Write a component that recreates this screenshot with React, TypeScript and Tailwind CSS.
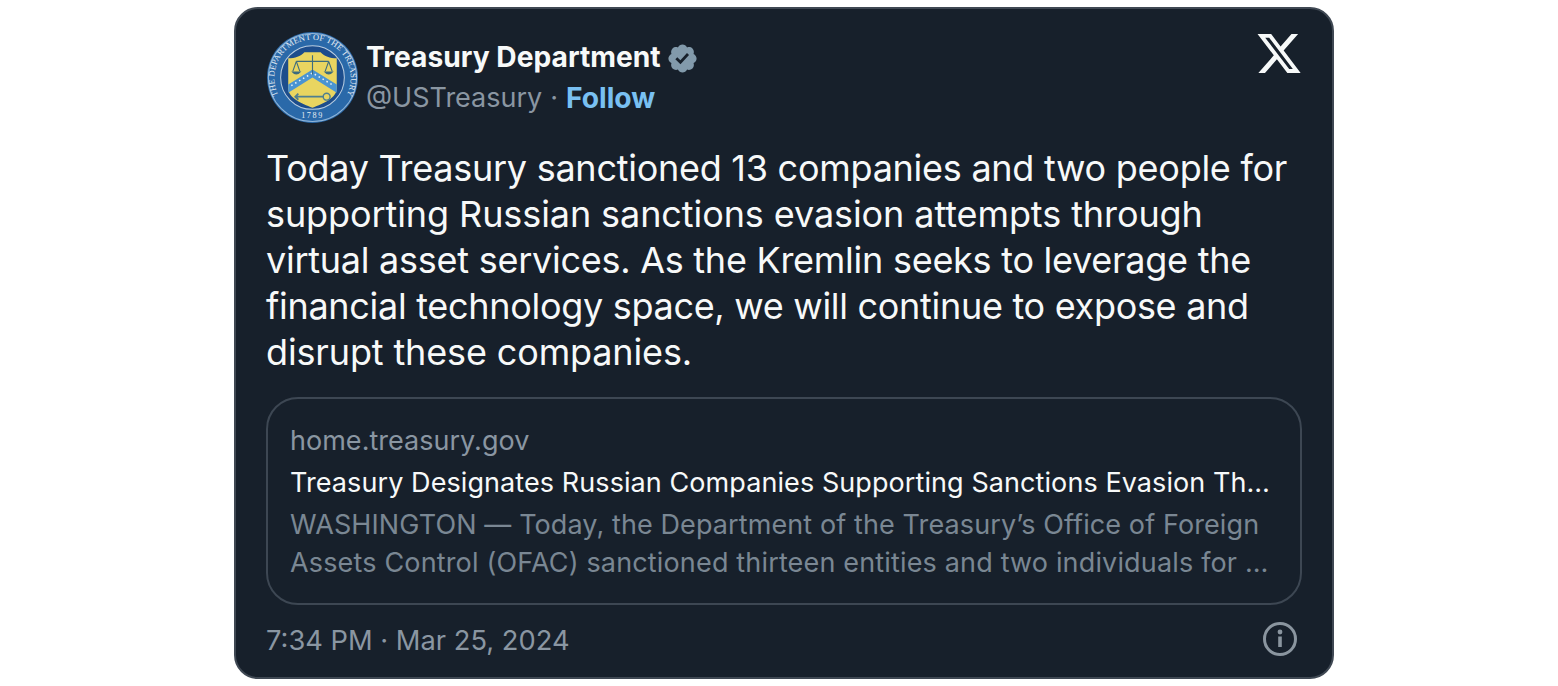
export default function App() {
  const font = { fontFamily: 'Inter, "Liberation Sans", sans-serif' };
  return (
    <div className="w-[1558px] h-[686px] bg-white pt-[7px] pl-[234px] overflow-hidden" style={font}>
      <div className="w-[1100px] h-[672px] bg-[#17202b] border-2 border-[#3f4853] rounded-[24px] pt-[24px] px-[30px] flex flex-col">
        <div className="flex justify-between h-[92px]">
          <div className="flex gap-[8px]">
            <svg width="91" height="91" viewBox="0 0 90 90" className="mt-[-1px] ml-[1px] shrink-0">
              <circle cx="45" cy="45" r="45" fill="#2a69a9" />
              <circle cx="45" cy="45" r="43.6" fill="none" stroke="#8fb4d8" strokeWidth="1" />
              <circle cx="45" cy="45" r="31.5" fill="#1d4d8c" stroke="#b9cde0" strokeWidth="1" />
              <defs>
                <path id="seal-top" d="M 11 62 A 37.8 37.8 0 1 1 79 62" />
              </defs>
              <text fontSize="8.4" fill="#e6edf3" fontFamily='"Liberation Serif", serif' letterSpacing="0.1">
                <textPath href="#seal-top" startOffset="50%" textAnchor="middle">THE DEPARTMENT OF THE TREASURY</textPath>
              </text>
              <text x="45" y="85" textAnchor="middle" fontSize="8" fill="#e6edf3" fontFamily='"Liberation Serif", serif' letterSpacing="1.6">1789</text>
              <path d="M21 26 C28 26 33 24 37 20 L53 20 C57 24 62 26 69 26 L69 56 C69 65 56 71 45 75 C34 71 21 65 21 56 Z" fill="#e9d560" />
              <path d="M21 52 L45 37 L69 52 L69 60 L45 45 L21 60 Z" fill="#4a94d2" />
              <path d="M24 53 L45 40.5 L66 53" fill="none" stroke="#eef3f5" strokeWidth="1.5" strokeDasharray="1.5 3" />
              <path d="M29 29 H61 M45 23 V42 M29 29 L25.5 39 M29 29 L32.5 39 M61 29 L57.5 39 M61 29 L64.5 39" stroke="#3d6c7e" strokeWidth="1.1" fill="none" />
              <path d="M24 39 Q29 45 34 39 Z M56 39 Q61 45 66 39 Z" fill="#3d6c7e" />
              <path d="M29 64 H56 M31 61 L28 64 L31 67" stroke="#4f7f90" strokeWidth="1.8" fill="none" />
              <circle cx="59" cy="64" r="3.4" fill="none" stroke="#4f7f90" strokeWidth="1.4" />
            </svg>
            <div className="flex flex-col pt-[4px]">
              <div className="flex items-center h-[40px]">
                <span className="text-[28.2px] font-bold text-[#f7f9f9] leading-[40px]">Treasury Department</span>
                <svg width="33" height="33" viewBox="0 0 24 24" className="ml-[5px] mt-[2px]">
                  <path fill="#829aab" d="M22.25 12c0-1.43-.88-2.67-2.19-3.34.46-1.39.2-2.9-.81-3.91s-2.52-1.27-3.91-.81c-.66-1.31-1.91-2.19-3.34-2.19s-2.67.88-3.33 2.19c-1.4-.46-2.91-.2-3.92.81s-1.26 2.52-.8 3.91c-1.31.67-2.2 1.91-2.2 3.34s.89 2.67 2.2 3.34c-.46 1.39-.21 2.9.8 3.91s2.52 1.26 3.91.81c.67 1.31 1.91 2.19 3.34 2.19s2.68-.88 3.34-2.19c1.39.45 2.9.2 3.91-.81s1.27-2.52.81-3.91c1.31-.67 2.19-1.91 2.19-3.34zm-11.71 4.2L6.8 12.46l1.41-1.42 2.26 2.26 4.8-5.23 1.47 1.36-6.2 6.77z" />
                </svg>
              </div>
              <div className="flex items-center h-[40px] text-[27px] leading-[40px] pt-[1px]">
                <span className="text-[#8a96a2]">@USTreasury</span>
                <span className="text-[#8a96a2] mx-[8px]">·</span>
                <span className="font-bold text-[28.2px] text-[#79c0f2]">Follow</span>
              </div>
            </div>
          </div>
          <svg width="48" height="44" viewBox="0 0 24 22" className="mr-[-1px] mt-[1px]">
            <path fill="#f7f9f9" d="M18.244 0h3.308l-7.227 8.26 8.502 11.24H16.17l-5.214-6.817L4.99 19.5H1.68l7.73-8.835L1.254 0H8.08l4.713 6.231zm-1.161 17.52h1.833L7.084 1.876H5.117z" />
          </svg>
        </div>
        <p className="mt-[20px] text-[36px] leading-[46px] text-[#f7f9f9] whitespace-nowrap">
          <span className="tracking-[-0.26px]">Today Treasury sanctioned 13 companies and two people for</span><br />
          <span className="tracking-[-0.09px]">supporting Russian sanctions evasion attempts through</span><br />
          <span className="tracking-[-0.26px]">virtual asset services. As the Kremlin seeks to leverage the</span><br />
          <span className="tracking-[-0.3px]">financial technology space, we will continue to expose and</span><br />
          <span className="tracking-[-0.14px]">disrupt these companies.</span>
        </p>
        <div className="mt-[22px] h-[208px] border-2 border-[#3d4753] rounded-[32px] px-[22px] pt-[23px]">
          <div className="text-[27px] leading-[38px] tracking-[0.02px] text-[#8a96a2]">home.treasury.gov</div>
          <div className="mt-[4px] text-[27px] leading-[38px] tracking-[0.08px] text-[#f7f9f9] whitespace-nowrap">Treasury Designates Russian Companies Supporting Sanctions Evasion Th…</div>
          <div className="mt-[4px] text-[27px] leading-[38px] text-[#7a8793] whitespace-nowrap">
            <span className="tracking-[0.1px]">WASHINGTON — Today, the Department of the Treasury’s Office of Foreign</span><br />
            <span className="tracking-[0.16px]">Assets Control (OFAC) sanctioned thirteen entities and two individuals for …</span>
          </div>
        </div>
        <div className="mt-[16px] flex justify-between items-center h-[40px]">
          <span className="text-[27.3px] text-[#8a96a2]">7:34 PM · Mar 25, 2024</span>
          <svg width="34" height="34" viewBox="0 0 34 34" fill="none" className="mr-[5px] mt-[-4px]">
            <circle cx="17" cy="17" r="15.5" stroke="#8a959f" strokeWidth="3" />
            <circle cx="17" cy="10" r="2.4" fill="#8a959f" />
            <rect x="15.2" y="14.5" width="3.6" height="10.5" fill="#8a959f" />
          </svg>
        </div>
      </div>
    </div>
  );
}
